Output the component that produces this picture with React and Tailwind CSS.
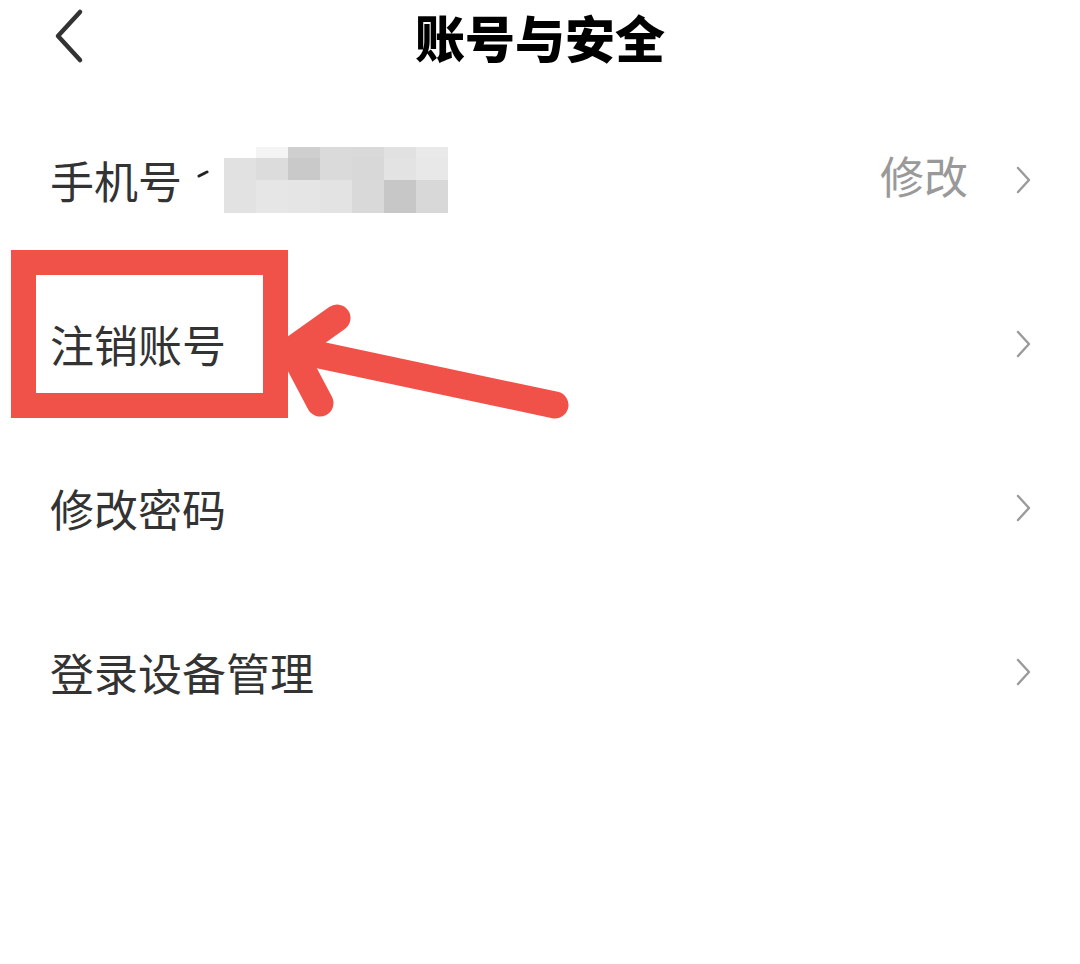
import React from "react";

const mosaic = [
  ["#ffffff", "#f4f4f4", "#cfcfcf", "#dadada", "#d9d9d9", "#e1e1e1", "#e9e9e9"],
  ["#e1e1e1", "#dcdcdc", "#c9c9c9", "#dadada", "#d8d8d8", "#e3e3e3", "#e8e8e8"],
  ["#e2e2e2", "#e6e6e6", "#e5e5e5", "#e3e3e3", "#d9d9d9", "#c7c7c7", "#d8d8d8"],
];

const Chevron = () => (
  <svg width="16" height="28" viewBox="0 0 16 28" className="shrink-0">
    <path d="M2 2 L13 14 L2 26" fill="none" stroke="#9a9a9a" strokeWidth="2.4" strokeLinecap="round" strokeLinejoin="round" />
  </svg>
);

const Row = ({ label, children }) => (
  <div className="h-[164px] flex items-center justify-between pl-[50px] pr-[48px]">
    <div className="flex items-center">
      <span className="text-[44px] text-[#333333] leading-[1.2]">{label}</span>
      {children}
    </div>
    <Chevron />
  </div>
);

const Mosaic = () => (
  <div className="flex items-center ml-[14px]">
    <svg width="14" height="10" viewBox="0 0 14 10" className="mr-[14px] -mt-[14px]">
      <path d="M3 8 L11 4" stroke="#222" strokeWidth="3" strokeLinecap="round" />
    </svg>
    <div className="flex flex-col">
      {mosaic.map((row, r) => (
        <div key={r} className={r === 0 ? "flex h-[11px]" : r === 1 ? "flex h-[22px]" : "flex h-[33px]"}>
          {row.map((c, i) => (
            <div key={i} className="w-[32px]" style={{ background: c }} />
          ))}
        </div>
      ))}
    </div>
  </div>
);

export default function App() {
  return (
    <div className="relative w-[1080px] h-[964px] bg-white overflow-hidden font-['Noto_Sans_CJK_SC',sans-serif]">
      <header className="relative h-[72px] flex items-center justify-center">
        <button className="absolute left-[50px] top-[8px] outline-none">
          <svg width="40" height="56" viewBox="0 0 40 56">
            <path d="M30 4 L8 28 L30 52" fill="none" stroke="#333333" strokeWidth="4.5" strokeLinecap="round" strokeLinejoin="round" />
          </svg>
        </button>
        <h1 className="text-[50px] font-black text-black leading-[1.2]">账号与安全</h1>
      </header>

      <div className="mt-[26px] flex flex-col">
        <Row label="手机号">
          <Mosaic />
        </Row>
        <Row label="注销账号" />
        <Row label="修改密码" />
        <Row label="登录设备管理" />
      </div>

      <div className="absolute right-[112px] top-[149px] text-[44px] text-[#999999] leading-[1.2]">修改</div>

      <div className="absolute left-[11px] top-[250px] w-[277px] h-[168px] border-[25px] border-[#f0524a]" />
      <svg className="absolute left-0 top-0 pointer-events-none" width="1080" height="964">
        <g stroke="#f0524a" strokeWidth="27" strokeLinecap="round" fill="none">
          <line x1="555" y1="405" x2="296" y2="350" />
          <line x1="292" y1="350" x2="337" y2="318" />
          <line x1="292" y1="350" x2="320" y2="403" />
        </g>
      </svg>
    </div>
  );
}
